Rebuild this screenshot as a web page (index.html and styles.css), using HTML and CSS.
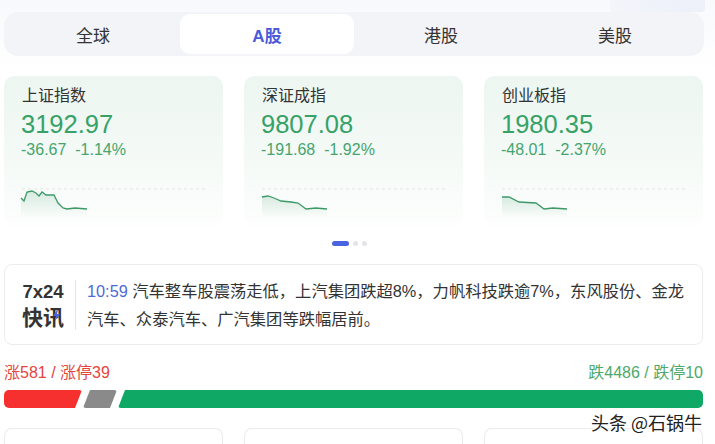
FILE: index.html
```html
<!DOCTYPE html>
<html lang="zh">
<head>
<meta charset="utf-8">
<link rel="stylesheet" href="styles.css">
</head>
<body>
<div class="page">
  <div class="deco"></div>
  <nav class="tabs">
    <div class="tab">全球</div>
    <div class="tab active">A股</div>
    <div class="tab">港股</div>
    <div class="tab">美股</div>
  </nav>

  <section class="cards">
    <div class="card">
      <div class="name">上证指数</div>
      <div class="value">3192.97</div>
      <div class="change">-36.67&nbsp;&nbsp;-1.14%</div>
      <svg class="spark" width="219" height="40" viewBox="0 0 219 40">
        <defs>
          <linearGradient id="g1" x1="0" y1="0" x2="0" y2="1">
            <stop offset="0" stop-color="#3d9a68" stop-opacity="0.18"/>
            <stop offset="1" stop-color="#3d9a68" stop-opacity="0"/>
          </linearGradient>
        </defs>
        <line x1="18" y1="9" x2="202" y2="9" stroke="#dfe7e2" stroke-width="1" stroke-dasharray="3 3"/>
        <polygon fill="url(#g1)" points="17,18 20,21 23,12 28,11 32,13 35,16 38,12 42,15 46,15 50,15 54,23 59,28 63,29 71,28 83,29 83,38 17,38"/>
        <polyline fill="none" stroke="#3d9a68" stroke-width="1.3" points="17,18 20,21 23,12 28,11 32,13 35,16 38,12 42,15 46,15 50,15 54,23 59,28 63,29 71,28 83,29"/>
      </svg>
    </div>
    <div class="card">
      <div class="name">深证成指</div>
      <div class="value">9807.08</div>
      <div class="change">-191.68&nbsp;&nbsp;-1.92%</div>
      <svg class="spark" width="219" height="40" viewBox="0 0 219 40">
        <line x1="18" y1="9" x2="202" y2="9" stroke="#dfe7e2" stroke-width="1" stroke-dasharray="3 3"/>
        <polygon fill="url(#g1)" points="18,17 24,16 30,18 37,21 47,22 54,23 62,29 72,28 83,29 83,38 18,38"/>
        <polyline fill="none" stroke="#3d9a68" stroke-width="1.3" points="18,17 24,16 30,18 37,21 47,22 54,23 62,29 72,28 83,29"/>
      </svg>
    </div>
    <div class="card">
      <div class="name">创业板指</div>
      <div class="value">1980.35</div>
      <div class="change">-48.01&nbsp;&nbsp;-2.37%</div>
      <svg class="spark" width="219" height="40" viewBox="0 0 219 40">
        <line x1="18" y1="9" x2="202" y2="9" stroke="#dfe7e2" stroke-width="1" stroke-dasharray="3 3"/>
        <polygon fill="url(#g1)" points="18,17 25,17 35,22 52,23 60,29 69,28 83,29 83,38 18,38"/>
        <polyline fill="none" stroke="#3d9a68" stroke-width="1.3" points="18,17 25,17 35,22 52,23 60,29 69,28 83,29"/>
      </svg>
    </div>
  </section>

  <div class="dots">
    <span class="dot on"></span><span class="dot"></span><span class="dot"></span>
  </div>

  <section class="news">
    <div class="badge">
      <div class="b1">7x24</div>
      <div class="b2">快<span class="xun">讯<svg class="bolt" width="7" height="11" viewBox="0 0 7 11"><polygon points="4,0 0,6 3,6 2,11 7,4 4,4 5,0" fill="#4a63e0"/></svg></span></div>
    </div>
    <div class="divider"></div>
    <p class="news-text"><span class="time">10:59 </span>汽车整车股震荡走低，上汽集团跌超8%，力帆科技跌逾7%，东风股份、金龙汽车、众泰汽车、广汽集团等跌幅居前。</p>
  </section>

  <section class="breadth">
    <div class="counts">
      <span class="up">涨581 / 涨停39</span>
      <span class="down">跌4486 / 跌停10</span>
    </div>
    <div class="bar">
      <div class="seg red"></div>
      <div class="seg grey"></div>
      <div class="seg green"></div>
    </div>
  </section>

  <section class="cards bottom">
    <div class="card2"></div>
    <div class="card2"></div>
    <div class="card2"></div>
  </section>

  <div class="watermark">头条 @石锅牛</div>
</div>
</body>
</html>
```

FILE: styles.css
```css
* { box-sizing: border-box; }
html, body { margin: 0; padding: 0; }
body {
  width: 715px;
  height: 444px;
  overflow: hidden;
  background: #fff;
  font-family: "Liberation Sans", "Noto Sans CJK SC", sans-serif;
  color: #333;
}
.page {
  position: relative;
  padding: 12px 11px 0 4px;
  background: linear-gradient(180deg, #f8f9fc 0, #fff 70px);
  height: 444px;
  overflow: hidden;
}
.deco {
  position: absolute;
  right: 10px;
  top: 0;
  width: 95px;
  height: 12px;
  background: linear-gradient(90deg, rgba(236,239,249,0.4), rgba(232,235,248,0.7));
  border-radius: 0 0 4px 4px;
}
.tabs {
  position: relative;
  display: grid;
  grid-template-columns: repeat(4, 1fr);
  width: 700px;
  height: 44px;
  padding: 2px;
  background: #f3f4f8;
  border-radius: 14px;
}
.tab {
  display: flex;
  align-items: center;
  justify-content: center;
  font-size: 17px;
  color: #333;
  border-radius: 10px;
}
.tab.active {
  background: #fff;
  color: #4a5ad8;
  font-weight: bold;
}
.cards {
  display: grid;
  grid-template-columns: repeat(3, 219px);
  column-gap: 21px;
  margin-top: 20px;
}
.card {
  height: 150px;
  border-radius: 10px;
  padding-top: 10px;
  background: linear-gradient(180deg, #edf6f1 0, #f5faf7 60%, #fdfefd 100%);
}
.name {
  padding-left: 18px;
  font-size: 16px;
  line-height: 20px;
  color: #333;
}
.value {
  padding-left: 17px;
  margin-top: 3px;
  font-size: 25.5px;
  line-height: 30px;
  color: #36a267;
}
.change {
  padding-left: 17px;
  font-size: 16px;
  line-height: 22px;
  color: #46a56e;
}
.spark {
  display: block;
  margin-top: 19px;
}
.dots {
  display: flex;
  justify-content: center;
  align-items: center;
  gap: 4px;
  height: 7px;
  margin-top: 14px;
  padding-right: 10px;
}
.dot {
  width: 5px;
  height: 5px;
  border-radius: 3px;
  background: #e2e4ea;
}
.dot.on {
  width: 17px;
  background: #4a63e0;
}
.news {
  display: flex;
  align-items: center;
  width: 699px;
  height: 81px;
  margin-top: 17px;
  border: 1px solid #ececec;
  border-radius: 8px;
  padding: 0 8px 0 17px;
}
.badge {
  width: 42px;
  text-align: center;
  font-weight: bold;
  color: #333;
}
.b1 { font-size: 18.5px; line-height: 23px; }
.b2 { font-size: 21px; line-height: 26px; font-family: "Noto Sans CJK SC", sans-serif; }
.xun { position: relative; }
.bolt { position: absolute; left: 10px; top: 9px; }
.divider {
  width: 1px;
  height: 50px;
  background: #e6e6e6;
  margin: 0 11px 0 11px;
}
.news-text {
  flex: 1;
  margin: 0;
  font-size: 16.3px;
  line-height: 28px;
  color: #333;
}
.time { color: #4d6bd8; }
.breadth { margin-top: 17px; width: 699px; }
.counts {
  display: flex;
  justify-content: space-between;
  font-size: 16px;
  line-height: 22px;
}
.up { color: #e2453c; }
.down { color: #4ea86b; }
.bar {
  display: flex;
  gap: 1px;
  height: 18px;
  margin-top: 6px;
}
.seg { height: 18px; }
.red {
  width: 78px;
  background: #f5302e;
  border-radius: 5px 3px 3px 5px;
  clip-path: polygon(0 0, 100% 0, calc(100% - 7px) 100%, 0 100%);
}
.grey {
  width: 34px;
  background: #8a8a8a;
  border-radius: 3px;
  clip-path: polygon(7px 0, 100% 0, calc(100% - 7px) 100%, 0 100%);
}
.green {
  flex: 1;
  background: #0fa865;
  border-radius: 3px 5px 5px 3px;
  clip-path: polygon(7px 0, 100% 0, 100% 100%, 0 100%);
}
.bottom { margin-top: 20px; }
.card2 {
  height: 16px;
  border: 1px solid #ebebeb;
  border-bottom: none;
  border-radius: 8px 8px 0 0;
}
.watermark {
  position: absolute;
  right: 13px;
  top: 409px;
  font-size: 18px;
  color: #222;
  font-family: "Noto Sans CJK SC", sans-serif;
  text-shadow: 0 0 2px #fff, 0 0 2px #fff, 0 0 2px #fff;
}
```
